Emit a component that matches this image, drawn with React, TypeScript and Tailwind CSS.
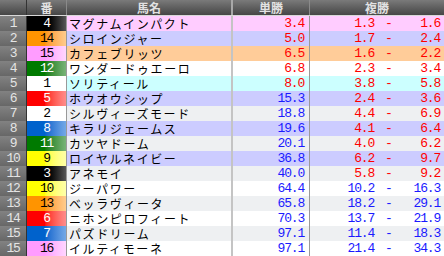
import React from 'react'

type Row = {
  no: string
  gate: number
  name: string
  win: string
  placeLo: string
  placeHi: string
  bg: string
  winRed: boolean
  placeRed: boolean
}

// waku (gate) colour by horse number
const gateClass: Record<number, string> = {
  1: 'bg-white text-black',
  2: 'bg-linear-to-r from-[#000000] from-45% to-[#575757] text-white',
  3: 'bg-linear-to-r from-[#ff0000] from-45% to-[#ff8c8c] text-white',
  4: 'bg-linear-to-r from-[#0062cc] from-45% to-[#74a9e6] text-white',
  5: 'bg-linear-to-r from-[#ffff00] from-45% to-[#ffffa8] text-black',
  6: 'bg-linear-to-r from-[#007a00] from-45% to-[#78b478] text-white',
  7: 'bg-linear-to-r from-[#ff9400] from-45% to-[#ffcc8c] text-black',
  8: 'bg-linear-to-r from-[#ff9cff] from-45% to-[#ffd6ff] text-black'
}

const waku = (n: number) => Math.ceil(n / 2)

const rows: Row[] = [
  { no: '1', gate: 4, name: 'マグナムインパクト', win: '3.4', placeLo: '1.3', placeHi: '1.6', bg: 'bg-[#ffccff]', winRed: true, placeRed: true },
  { no: '2', gate: 14, name: 'シロインジャー', win: '5.0', placeLo: '1.7', placeHi: '2.4', bg: 'bg-[#ccccff]', winRed: true, placeRed: true },
  { no: '3', gate: 15, name: 'カフェブリッツ', win: '6.5', placeLo: '1.6', placeHi: '2.2', bg: 'bg-[#ffcc99]', winRed: true, placeRed: true },
  { no: '4', gate: 12, name: 'ワンダードゥエーロ', win: '6.8', placeLo: '2.3', placeHi: '3.4', bg: 'bg-white', winRed: true, placeRed: true },
  { no: '5', gate: 1, name: 'ソリティール', win: '8.0', placeLo: '3.8', placeHi: '5.8', bg: 'bg-[#ccffff]', winRed: true, placeRed: true },
  { no: '6', gate: 5, name: 'ホウオウシップ', win: '15.3', placeLo: '2.4', placeHi: '3.6', bg: 'bg-[#ccccff]', winRed: false, placeRed: true },
  { no: '7', gate: 2, name: 'シルヴィーズモード', win: '18.8', placeLo: '4.4', placeHi: '6.9', bg: 'bg-[#eef0f2]', winRed: false, placeRed: true },
  { no: '8', gate: 8, name: 'キラリジェームス', win: '19.6', placeLo: '4.1', placeHi: '6.4', bg: 'bg-[#ccccff]', winRed: false, placeRed: true },
  { no: '9', gate: 11, name: 'カツヤドーム', win: '20.1', placeLo: '4.0', placeHi: '6.2', bg: 'bg-[#eef0f2]', winRed: false, placeRed: true },
  { no: '10', gate: 9, name: 'ロイヤルネイビー', win: '36.8', placeLo: '6.2', placeHi: '9.7', bg: 'bg-[#ccccff]', winRed: false, placeRed: true },
  { no: '11', gate: 3, name: 'アネモイ', win: '40.0', placeLo: '5.8', placeHi: '9.2', bg: 'bg-[#eef0f2]', winRed: false, placeRed: true },
  { no: '12', gate: 10, name: 'ジーパワー', win: '64.4', placeLo: '10.2', placeHi: '16.3', bg: 'bg-white', winRed: false, placeRed: false },
  { no: '13', gate: 13, name: 'ベッラヴィータ', win: '65.8', placeLo: '18.2', placeHi: '29.1', bg: 'bg-[#eef0f2]', winRed: false, placeRed: false },
  { no: '14', gate: 6, name: 'ニホンピロフィート', win: '70.3', placeLo: '13.7', placeHi: '21.9', bg: 'bg-white', winRed: false, placeRed: false },
  { no: '15', gate: 7, name: 'パズドリーム', win: '97.1', placeLo: '11.4', placeHi: '18.3', bg: 'bg-[#eef0f2]', winRed: false, placeRed: false },
  { no: '15', gate: 16, name: 'イルティモーネ', win: '97.1', placeLo: '21.4', placeHi: '34.3', bg: 'bg-white', winRed: false, placeRed: false }
]

const mono = "font-['Liberation_Mono',monospace] tracking-[-1.2px]"
const jp = "font-['Noto_Sans_CJK_JP',sans-serif]"

export default function App() {
  return (
    <div className="w-[444px] h-[256px] overflow-hidden bg-white">
      {/* Header */}
      <div
        className={`flex h-[15px] bg-linear-to-b from-[#7a7a7a] to-[#464646] text-[#e2e2e2] text-[12px] font-bold leading-[15px] ${jp}`}
      >
        <div className="w-[27px] border-r border-[#333]" />
        <div className="w-[40px] border-r border-[#8a8a8a] text-center">番</div>
        <div className="w-[166px] border-r-2 border-[#a8a8a8] text-center">馬名</div>
        <div className="w-[77px] border-r border-[#8a8a8a] text-center">単勝</div>
        <div className="flex-1 text-center">複勝</div>
      </div>
      <div className="h-px bg-[#d8d8d8]" />

      {/* Rows */}
      {rows.map((r, i) => (
        <div key={i} className="flex h-[15px] leading-[15px]">
          <div
            className={`w-[27px] border-r border-[#333] bg-linear-to-b from-[#828282] to-[#676767] text-center text-[#e4e4e4] text-[13px] ${mono}`}
          >
            {r.no}
          </div>
          <div
            className={`w-[40px] border-r border-[#999] text-center text-[13px] ${mono} ${gateClass[waku(r.gate)]}`}
          >
            {r.gate}
          </div>
          <div
            className={`w-[166px] border-r-2 border-[#c4c4c4] pl-[2px] text-[12px] tracking-[1.6px] text-black whitespace-nowrap ${jp} ${r.bg}`}
          >
            {r.name}
          </div>
          <div
            className={`w-[77px] border-r border-[#999] pr-[5px] text-right text-[13px] ${mono} ${r.bg} ${
              r.winRed ? 'text-[#ff0000]' : 'text-[#1a1aff]'
            }`}
          >
            {r.win}
          </div>
          <div
            className={`flex flex-1 text-[13px] ${mono} ${r.bg} ${
              r.placeRed ? 'text-[#ff0000]' : 'text-[#1a1aff]'
            }`}
          >
            <span className="w-[64px] text-right">{r.placeLo}</span>
            <span className="ml-[11px]">-</span>
            <span className="flex-1 pr-[4px] text-right">{r.placeHi}</span>
          </div>
        </div>
      ))}
    </div>
  )
}
